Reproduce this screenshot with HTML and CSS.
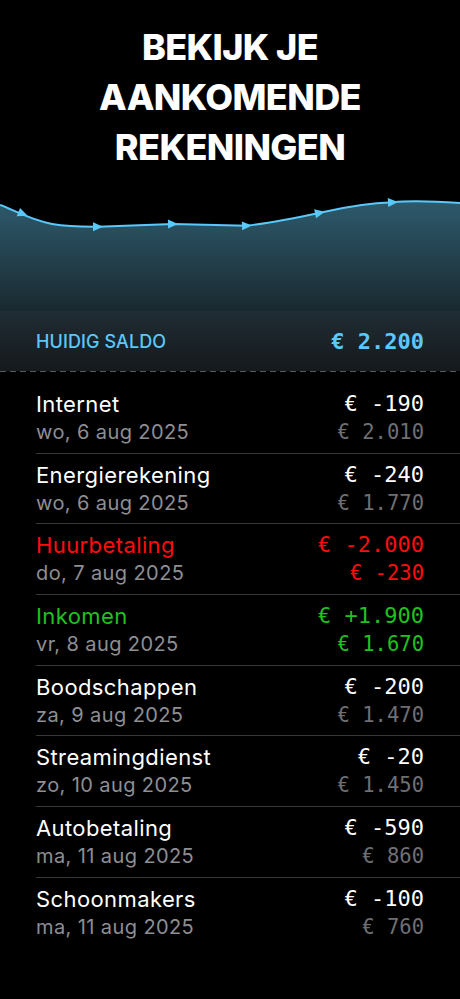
FILE: index.html
```html
<!DOCTYPE html>
<html lang="nl">
<head>
<meta charset="utf-8">
<title>Bekijk je aankomende rekeningen</title>
<link rel="stylesheet" href="styles.css">
</head>
<body>
<div class="screen">
  <h1 class="headline">BEKIJK JE<br>AANKOMENDE<br>REKENINGEN</h1>

  <svg class="chart" width="460" height="139" viewBox="0 0 460 139">
    <defs>
      <linearGradient id="fill" x1="0" y1="0" x2="0" y2="1">
        <stop offset="0" stop-color="#2d5a6c"/>
        <stop offset="1" stop-color="#1a2930"/>
      </linearGradient>
    </defs>
    <path d="M0,33 C12,37 30,48 52,52 C70,55 85,54.7 98,54.7 L173,52 L247,53.7 C270,51 300,45 320,40.7 C345,35 370,31 393,30.3 C405,29 430,29 460,31 L460,139 L0,139 Z" fill="url(#fill)"/>
    <path d="M0,33 C12,37 30,48 52,52 C70,55 85,54.7 98,54.7 L173,52 L247,53.7 C270,51 300,45 320,40.7 C345,35 370,31 393,30.3 C405,29 430,29 460,31" fill="none" stroke="#5ac8fa" stroke-width="2"/>
    <g fill="#5ac8fa">
      <polygon points="-5,-4.5 5,0 -5,4.5" transform="translate(23,42) rotate(22)"/>
      <polygon points="-5,-4.5 5,0 -5,4.5" transform="translate(98,54.7) rotate(0)"/>
      <polygon points="-5,-4.5 5,0 -5,4.5" transform="translate(173,52) rotate(-1)"/>
      <polygon points="-5,-4.5 5,0 -5,4.5" transform="translate(247,53.7) rotate(-2)"/>
      <polygon points="-5,-4.5 5,0 -5,4.5" transform="translate(320,40.7) rotate(-12)"/>
      <polygon points="-5,-4.5 5,0 -5,4.5" transform="translate(393,30.3) rotate(-3)"/>
    </g>
  </svg>

  <div class="saldo">
    <span class="saldo-label">HUIDIG SALDO</span>
    <span class="saldo-value">€ 2.200</span>
  </div>
  <div class="dashed"></div>

  <ul class="bills">
    <li class="bill">
      <span class="name">Internet</span><span class="amount">€ -190</span>
      <span class="date">wo, 6 aug 2025</span><span class="balance">€ 2.010</span>
    </li>
    <li class="bill">
      <span class="name">Energierekening</span><span class="amount">€ -240</span>
      <span class="date">wo, 6 aug 2025</span><span class="balance">€ 1.770</span>
    </li>
    <li class="bill bill-red">
      <span class="name">Huurbetaling</span><span class="amount">€ -2.000</span>
      <span class="date">do, 7 aug 2025</span><span class="balance">€ -230</span>
    </li>
    <li class="bill bill-green">
      <span class="name">Inkomen</span><span class="amount">€ +1.900</span>
      <span class="date">vr, 8 aug 2025</span><span class="balance">€ 1.670</span>
    </li>
    <li class="bill">
      <span class="name">Boodschappen</span><span class="amount">€ -200</span>
      <span class="date">za, 9 aug 2025</span><span class="balance">€ 1.470</span>
    </li>
    <li class="bill">
      <span class="name">Streamingdienst</span><span class="amount">€ -20</span>
      <span class="date">zo, 10 aug 2025</span><span class="balance">€ 1.450</span>
    </li>
    <li class="bill">
      <span class="name">Autobetaling</span><span class="amount">€ -590</span>
      <span class="date">ma, 11 aug 2025</span><span class="balance">€ 860</span>
    </li>
    <li class="bill">
      <span class="name">Schoonmakers</span><span class="amount">€ -100</span>
      <span class="date">ma, 11 aug 2025</span><span class="balance">€ 760</span>
    </li>
  </ul>
</div>
</body>
</html>
```

FILE: styles.css
```css
html, body {
  margin: 0;
  padding: 0;
  background: #000;
}

.screen {
  width: 460px;
  min-height: 999px;
  background: #000;
  color: #fff;
  font-family: Inter, "Noto Sans", "Liberation Sans", sans-serif;
}

.headline {
  margin: 0;
  padding-top: 22px;
  font-size: 36px;
  line-height: 50px;
  font-weight: 800;
  letter-spacing: -0.6px;
  text-align: center;
  color: #fff;
}

.chart {
  display: block;
}

.saldo {
  height: 60px;
  display: flex;
  align-items: center;
  justify-content: space-between;
  padding: 0 36px;
  background: linear-gradient(#1f2d34, #15191c);
}

.saldo-label {
  font-size: 18px;
  font-weight: 500;
  color: #5ac8fa;
  letter-spacing: 0.1px;
}

.saldo-value {
  font-family: "DejaVu Sans Mono", "Liberation Mono", monospace;
  font-size: 22px;
  font-weight: 700;
  color: #5ac8fa;
}

.dashed {
  height: 1px;
  background: repeating-linear-gradient(90deg, #5a5a5a 0 6px, transparent 6px 10px);
}

.bills {
  list-style: none;
  margin: 0;
  padding: 11px 0 0;
}

.bill {
  display: grid;
  grid-template-columns: 1fr auto;
  margin-left: 36px;
  padding: 7px 36px 6.7px 0;
  border-bottom: 1px solid #38383a;
}

.bill:last-child {
  border-bottom: none;
}

.name {
  font-size: 22px;
  line-height: 28px;
  letter-spacing: 0.4px;
  color: #fff;
}

.date {
  font-size: 20px;
  line-height: 28px;
  letter-spacing: 0.4px;
  color: #8e8e93;
}

.amount,
.balance {
  font-family: "DejaVu Sans Mono", "Liberation Mono", monospace;
  text-align: right;
  line-height: 28px;
}

.amount {
  font-size: 22px;
  color: #fff;
}

.balance {
  font-size: 20.5px;
  color: #6f6f73;
}

.bill-red .name,
.bill-red .amount,
.bill-red .balance {
  color: #ff0d0d;
}

.bill-green .name,
.bill-green .amount,
.bill-green .balance {
  color: #1fc21f;
}
```
